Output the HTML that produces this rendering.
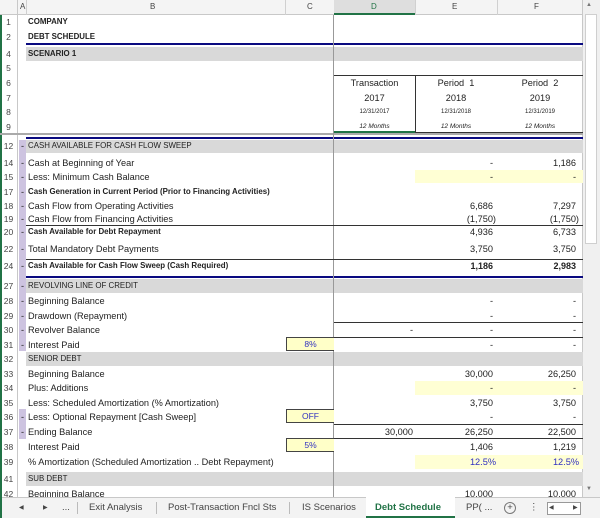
<!DOCTYPE html>
<html><head><meta charset="utf-8"><style>
*{margin:0;padding:0;box-sizing:border-box}
body{width:600px;height:518px;overflow:hidden;background:#fff;font-family:"Liberation Sans",sans-serif;font-size:9.2px;color:#222;position:relative}
.a{position:absolute;white-space:nowrap}
.r{position:absolute;left:0;width:583px;height:14px;line-height:14px}
.rn{position:absolute;left:0;width:17px;text-align:center;color:#444;font-size:8.5px}
.t{position:absolute;left:28px}
.e{position:absolute;right:90px}
.f{position:absolute;right:7px}
.d{position:absolute;right:170px}
.b{font-weight:bold;font-size:7.9px}
.u{font-size:7.9px}
.g{background:#d9d9d9}
.hl{position:absolute;height:1px;background:#333}
.bl{position:absolute;left:26px;width:557px;height:2px;background:#0a0a80}
.y{position:absolute;background:#ffffd4}
.inp{position:absolute;left:286px;width:48px;height:14px;background:#ffffc8;border:1px solid #444;border-right:none;color:#3030c0;text-align:center;line-height:12px;font-size:8.5px}
.blue{color:#3030c0}
</style></head><body>
<div class="a" style="left:0;top:0;width:2px;height:518px;background:#217346"></div>
<div class="a" style="left:0;top:0;width:583px;height:15px;background:#f4f4f4;border-bottom:1px solid #c8c8c8"></div>
<div class="a" style="left:334px;top:0;width:81px;height:15px;background:#dedede;border-bottom:2px solid #217346"></div>
<div class="a" style="left:20px;top:2px;font-size:8px;color:#444">A</div>
<div class="a" style="left:150px;top:2px;font-size:8px;color:#444">B</div>
<div class="a" style="left:307px;top:2px;font-size:8px;color:#444">C</div>
<div class="a" style="left:371px;top:2px;font-size:8px;color:#217346">D</div>
<div class="a" style="left:452px;top:2px;font-size:8px;color:#444">E</div>
<div class="a" style="left:534px;top:2px;font-size:8px;color:#444">F</div>
<div class="a" style="left:17px;top:0;width:1px;height:497px;background:#c8c8c8"></div>
<div class="a" style="left:26px;top:0;width:1px;height:15px;background:#d0d0d0"></div>
<div class="a" style="left:285px;top:0;width:1px;height:15px;background:#d0d0d0"></div>
<div class="a" style="left:415px;top:0;width:1px;height:15px;background:#d0d0d0"></div>
<div class="a" style="left:497px;top:0;width:1px;height:15px;background:#d0d0d0"></div>
<div class="a" style="left:582px;top:0;width:1px;height:497px;background:#c8c8c8"></div>
<div class="a" style="left:583px;top:0;width:17px;height:497px;background:#f0f0f0"></div>
<div class="a" style="left:585px;top:14px;width:12px;height:230px;background:#fff;border:1px solid #cfcfcf"></div>
<div class="a" style="left:586px;top:2px;font-size:6px;color:#777">▲</div>
<div class="a" style="left:586px;top:486px;font-size:6px;color:#777">▼</div>

<div class="a g" style="left:26px;top:47px;width:557px;height:14px"></div>
<div class="a g" style="left:26px;top:140px;width:557px;height:13px"></div>
<div class="a g" style="left:26px;top:279px;width:557px;height:14px"></div>
<div class="a g" style="left:26px;top:352px;width:557px;height:14px"></div>
<div class="a g" style="left:26px;top:472px;width:557px;height:14px"></div>
<div class="y" style="left:415px;top:170px;width:168px;height:13px"></div>
<div class="y" style="left:415px;top:381px;width:168px;height:14px"></div>
<div class="y" style="left:415px;top:455px;width:168px;height:14px"></div>
<div class="a" style="left:19px;top:140px;width:7px;height:211px;background:#cdc3e0"></div>
<div class="a" style="left:19px;top:409px;width:7px;height:30px;background:#cdc3e0"></div>
<div class="bl" style="top:43px"></div>
<div class="bl" style="top:137px"></div>
<div class="bl" style="top:276px"></div>
<div class="a" style="left:0;top:133px;width:583px;height:2px;background:#aaa"></div>
<div class="a" style="left:333px;top:15px;width:1px;height:482px;background:#999"></div>
<div class="hl" style="left:334px;top:75px;width:249px"></div>
<div class="hl" style="left:334px;top:132px;width:249px"></div>
<div class="a" style="left:415px;top:75px;width:1px;height:58px;background:#333"></div>
<div class="a" style="left:334px;top:131px;width:81px;height:2px;background:#217346"></div>
<div class="hl" style="left:26px;top:225px;width:557px"></div>
<div class="hl" style="left:26px;top:259px;width:557px"></div>
<div class="hl" style="left:334px;top:322px;width:249px"></div>
<div class="hl" style="left:334px;top:337px;width:249px"></div>
<div class="hl" style="left:334px;top:424px;width:249px"></div>
<div class="hl" style="left:334px;top:438px;width:249px"></div>
<div class="inp" style="top:337px">8%</div>
<div class="inp" style="top:409px">OFF</div>
<div class="inp" style="top:438px">5%</div>

<div class="r" style="top:15px"><span class="rn">1</span><span class="t b">COMPANY</span></div>
<div class="r" style="top:30px"><span class="rn">2</span><span class="t b">DEBT SCHEDULE</span></div>
<div class="r" style="top:47px"><span class="rn">4</span><span class="t b">SCENARIO 1</span></div>
<div class="r" style="top:61px"><span class="rn">5</span></div>
<div class="r" style="top:76px"><span class="rn">6</span><span class="a" style="left:334px;width:81px;text-align:center">Transaction</span><span class="a" style="left:415px;width:82px;text-align:center">Period&nbsp; 1</span><span class="a" style="left:497px;width:86px;text-align:center">Period&nbsp; 2</span></div>
<div class="r" style="top:91px"><span class="rn">7</span><span class="a" style="left:334px;width:81px;text-align:center">2017</span><span class="a" style="left:415px;width:82px;text-align:center">2018</span><span class="a" style="left:497px;width:86px;text-align:center">2019</span></div>
<div class="r" style="top:105px;font-size:6px"><span class="rn">8</span><span class="a" style="left:334px;width:81px;text-align:center">12/31/2017</span><span class="a" style="left:415px;width:82px;text-align:center">12/31/2018</span><span class="a" style="left:497px;width:86px;text-align:center">12/31/2019</span></div>
<div class="r" style="top:120px;font-size:6.5px;font-style:italic"><span class="rn" style="font-style:normal">9</span><span class="a" style="left:334px;width:81px;text-align:center">12 Months</span><span class="a" style="left:415px;width:82px;text-align:center">12 Months</span><span class="a" style="left:497px;width:86px;text-align:center">12 Months</span></div>

<div class="r" style="top:139px"><span class="rn">12</span><span class="a" style="left:21px">-</span><span class="t u">CASH AVAILABLE FOR CASH FLOW SWEEP</span></div>
<div class="r" style="top:156px"><span class="rn">14</span><span class="a" style="left:21px">-</span><span class="t">Cash at Beginning of Year</span><span class="e">-</span><span class="f">1,186</span></div>
<div class="r" style="top:170px"><span class="rn">15</span><span class="a" style="left:21px">-</span><span class="t">Less: Minimum Cash Balance</span><span class="e">-</span><span class="f">-</span></div>
<div class="r" style="top:185px"><span class="rn">17</span><span class="a" style="left:21px">-</span><span class="t b">Cash Generation in Current Period (Prior to Financing Activities)</span></div>
<div class="r" style="top:199px"><span class="rn">18</span><span class="a" style="left:21px">-</span><span class="t">Cash Flow from Operating Activities</span><span class="e">6,686</span><span class="f">7,297</span></div>
<div class="r" style="top:212px"><span class="rn">19</span><span class="a" style="left:21px">-</span><span class="t">Cash Flow from Financing Activities</span><span class="e" style="right:87px">(1,750)</span><span class="f" style="right:4px">(1,750)</span></div>
<div class="r" style="top:225px"><span class="rn">20</span><span class="a" style="left:21px">-</span><span class="t b">Cash Available for Debt Repayment</span><span class="e">4,936</span><span class="f">6,733</span></div>
<div class="r" style="top:242px"><span class="rn">22</span><span class="a" style="left:21px">-</span><span class="t">Total Mandatory Debt Payments</span><span class="e">3,750</span><span class="f">3,750</span></div>
<div class="r" style="top:259px"><span class="rn">24</span><span class="a" style="left:21px">-</span><span class="t b">Cash Available for Cash Flow Sweep (Cash Required)</span><span class="e b" style="font-size:9px">1,186</span><span class="f b" style="font-size:9px">2,983</span></div>

<div class="r" style="top:279px"><span class="rn">27</span><span class="a" style="left:21px">-</span><span class="t u">REVOLVING LINE OF CREDIT</span></div>
<div class="r" style="top:294px"><span class="rn">28</span><span class="a" style="left:21px">-</span><span class="t">Beginning Balance</span><span class="e">-</span><span class="f">-</span></div>
<div class="r" style="top:309px"><span class="rn">29</span><span class="a" style="left:21px">-</span><span class="t">Drawdown (Repayment)</span><span class="e">-</span><span class="f">-</span></div>
<div class="r" style="top:323px"><span class="rn">30</span><span class="a" style="left:21px">-</span><span class="t">Revolver Balance</span><span class="d">-</span><span class="e">-</span><span class="f">-</span></div>
<div class="r" style="top:338px"><span class="rn">31</span><span class="a" style="left:21px">-</span><span class="t">Interest Paid</span><span class="e">-</span><span class="f">-</span></div>
<div class="r" style="top:352px"><span class="rn">32</span><span class="t u">SENIOR DEBT</span></div>
<div class="r" style="top:367px"><span class="rn">33</span><span class="t">Beginning Balance</span><span class="e">30,000</span><span class="f">26,250</span></div>
<div class="r" style="top:381px"><span class="rn">34</span><span class="t">Plus: Additions</span><span class="e">-</span><span class="f">-</span></div>
<div class="r" style="top:396px"><span class="rn">35</span><span class="t">Less: Scheduled Amortization (% Amortization)</span><span class="e">3,750</span><span class="f">3,750</span></div>
<div class="r" style="top:410px"><span class="rn">36</span><span class="a" style="left:21px">-</span><span class="t">Less: Optional Repayment [Cash Sweep]</span><span class="e">-</span><span class="f">-</span></div>
<div class="r" style="top:425px"><span class="rn">37</span><span class="a" style="left:21px">-</span><span class="t">Ending Balance</span><span class="d">30,000</span><span class="e">26,250</span><span class="f">22,500</span></div>
<div class="r" style="top:440px"><span class="rn">38</span><span class="t">Interest Paid</span><span class="e">1,406</span><span class="f">1,219</span></div>
<div class="r" style="top:455px"><span class="rn">39</span><span class="t">% Amortization (Scheduled Amortization .. Debt Repayment)</span><span class="e blue" style="right:87px">12.5%</span><span class="f blue" style="right:4px">12.5%</span></div>
<div class="r" style="top:472px"><span class="rn">41</span><span class="t u">SUB DEBT</span></div>
<div class="r" style="top:487px"><span class="rn">42</span><span class="t">Beginning Balance</span><span class="e">10,000</span><span class="f">10,000</span></div>

<div class="a" style="left:2px;top:497px;width:598px;height:21px;background:#f3f3f3;border-top:1px solid #c8c8c8;font-size:9.5px;color:#444;line-height:20px">
<span class="a" style="left:17px;font-size:6px">◀</span>
<span class="a" style="left:41px;font-size:6px">▶</span>
<span class="a" style="left:60px">...</span>
<span class="a" style="left:75px;top:4px;width:1px;height:12px;background:#bbb"></span>
<span class="a" style="left:87px">Exit Analysis</span>
<span class="a" style="left:154px;top:4px;width:1px;height:12px;background:#bbb"></span>
<span class="a" style="left:166px">Post-Transaction Fncl Sts</span>
<span class="a" style="left:287px;top:4px;width:1px;height:12px;background:#bbb"></span>
<span class="a" style="left:300px">IS Scenarios</span>
<span class="a" style="left:364px;top:-1px;width:89px;height:21px;background:#fff;border-bottom:2px solid #217346"></span>
<span class="a" style="left:373px;color:#217346;font-weight:bold">Debt Schedule</span>
<span class="a" style="left:464px">PP( ...</span>
<span class="a" style="left:502px;top:4px;width:12px;height:12px;border:1px solid #777;border-radius:50%;text-align:center;line-height:10px">+</span>
<span class="a" style="left:527px">⋮</span>
<span class="a" style="left:545px;top:4px;width:34px;height:13px;background:#fff;border:1px solid #999"></span>
<span class="a" style="left:547px;font-size:6px">◀</span>
<span class="a" style="left:571px;font-size:6px">▶</span>
</div>
</body></html>
